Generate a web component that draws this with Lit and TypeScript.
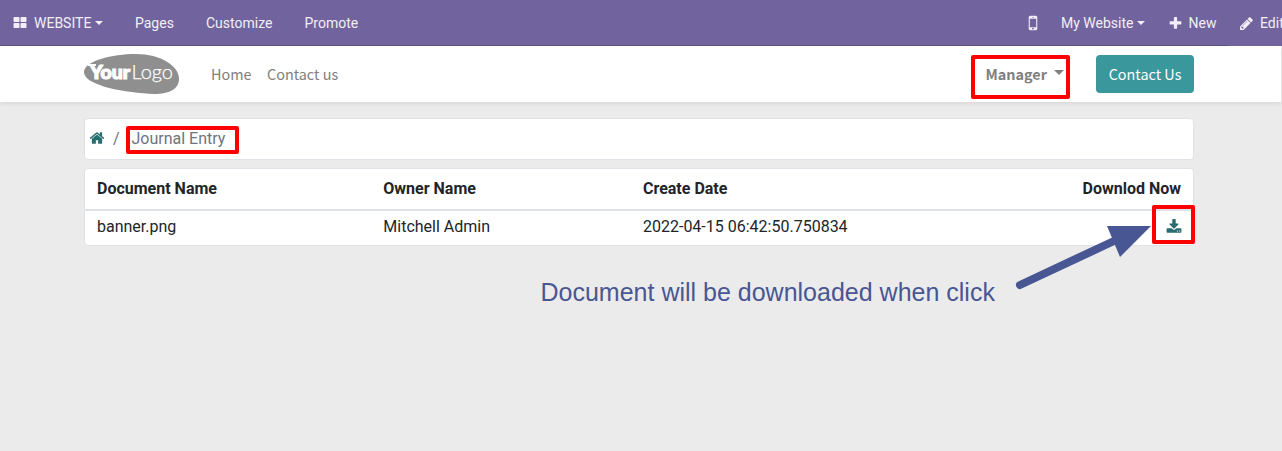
import { LitElement, html, css, svg } from "lit";
import { customElement, property } from "lit/decorators.js";

const ICONS: Record<string, string> = {
  grid: "M832 1024v384q0 52-38 90t-90 38h-512q-52 0-90-38t-38-90v-384q0-52 38-90t90-38h512q52 0 90 38t38 90zm0-768v384q0 52-38 90t-90 38h-512q-52 0-90-38t-38-90v-384q0-52 38-90t90-38h512q52 0 90 38t38 90zm896 768v384q0 52-38 90t-90 38h-512q-52 0-90-38t-38-90v-384q0-52 38-90t90-38h512q52 0 90 38t38 90zm0-768v384q0 52-38 90t-90 38h-512q-52 0-90-38t-38-90v-384q0-52 38-90t90-38h512q52 0 90 38t38 90z",
  mobile: "M976 1408q0-33-23.500-56.500t-56.500-23.500-56.500 23.500-23.500 56.500 23.500 56.500 56.500 23.500 56.500-23.500 23.500-56.500zm208-160v-704q0-13-9.500-22.500t-22.500-9.500h-512q-13 0-22.500 9.500t-9.500 22.500v704q0 13 9.500 22.500t22.500 9.500h512q13 0 22.500-9.500t9.500-22.500zm-192-848q0-16-16-16h-160q-16 0-16 16t16 16h160q16 0 16-16zm288-16v1024q0 52-38 90t-90 38h-512q-52 0-90-38t-38-90v-1024q0-52 38-90t90-38h512q52 0 90 38t38 90z",
  plus: "M1600 736v192q0 40-28 68t-68 28h-416v416q0 40-28 68t-68 28h-192q-40 0-68-28t-28-68v-416h-416q-40 0-68-28t-28-68v-192q0-40 28-68t68-28h416v-416q0-40 28-68t68-28h192q40 0 68 28t28 68v416h416q40 0 68 28t28 68z",
  pencil: "M491 1536l91-91-235-235-91 91v107h128v128h107zm523-928q0-22-22-22-10 0-17 7l-542 542q-7 7-7 17 0 22 22 22 10 0 17-7l542-542q7-7 7-17zm-54-192l416 416-832 832h-416v-416zm683 96q0 53-37 90l-166 166-416-416 166-165q36-38 90-38 53 0 91 38l235 234q37 39 37 91z",
  home: "M1472 992v480q0 26-19 45t-45 19h-384v-384h-256v384h-384q-26 0-45-19t-19-45v-480q0-1 .5-3t.5-3l575-474 575 474q1 2 1 6zm223-69l-62 74q-8 9-21 11h-3q-13 0-21-7l-692-577-692 577q-12 8-24 7-13-2-21-11l-62-74q-8-10-7-23.500t11-21.500l719-599q32-26 76-26t76 26l244 204v-195q0-14 9-23t23-9h192q14 0 23 9t9 23v408l219 182q10 8 11 21.500t-7 23.500z",
  download: "M1344 1344q0-26-19-45t-45-19-45 19-19 45 19 45 45 19 45-19 19-45zm256 0q0-26-19-45t-45-19-45 19-19 45 19 45 45 19 45-19 19-45zm128-224v320q0 40-28 68t-68 28h-1472q-40 0-68-28t-28-68v-320q0-40 28-68t68-28h465l135 136q58 56 136 56t136-56l136-136h464q40 0 68 28t28 68zm-325-569q17 41-14 70l-448 448q-18 19-45 19t-45-19l-448-448q-31-29-14-70 17-39 59-39h256v-448q0-26 19-45t45-19h256q26 0 45 19t19 45v448h256q42 0 59 39z",
};

@customElement("fa-icon")
export class FaIcon extends LitElement {
  @property() name = "home";
  static styles = css`
    :host { display: block; width: 15px; height: 15px; flex: none; }
    svg { display: block; width: 100%; height: 100%; fill: currentColor; overflow: visible; }
  `;
  render() {
    return html`<svg viewBox="0 0 1792 1792">${svg`<path d=${ICONS[this.name]} />`}</svg>`;
  }
}

@customElement("app-root")
export class AppRoot extends LitElement {
  static styles = css`
    :host {
      display: block; position: relative; height: 451px; overflow: hidden;
      background: #ebebeb; color: #212529; font: 16px/24px Roboto, sans-serif;
    }
    * { box-sizing: border-box; }
    .topbar {
      display: flex; align-items: center; height: 46px; width: 1282px; overflow: hidden;
      background: linear-gradient(#5d4f80, #5d4f80) 0 45px / 1228px 1px no-repeat #71639e;
      color: #f1eff5; font-size: 14px; line-height: 21px; white-space: nowrap;
    }
    .topbar > * { flex: none; }
    .grid-icon { width: 14px; height: 14px; margin-left: 12.500px; }
    .brand { margin-left: 7.500px; width: 62px; }
    .caret { border: 4px solid transparent; border-top-color: currentColor; border-bottom: 0; }
    .brand + .caret { margin-left: -1px; }
    .pages { margin-left: 32px; width: 39px; }
    .customize { margin-left: 32px; width: 66px; }
    .promote { margin-left: 32.500px; }
    .right { display: flex; align-items: center; margin-left: auto; width: 259px; }
    .right > * { flex: none; }
    .mobile { width: 20px; height: 20px; }
    .site { margin-left: 18px; width: 73px; }
    .site + .caret { margin-left: 3px; }
    .plus { margin-left: 22.500px; }
    .new { margin-left: 6px; width: 29px; }
    .pencil { margin-left: 21px; }
    .edit { margin-left: 6.500px; }
    .nav {
      display: flex; align-items: center; height: 56px; width: 1281px; padding-left: 84px;
      background: #fff; box-shadow: 0 2px 4px rgba(0,0,0,.08);
      font-family: "Source Sans Pro", "Noto Sans CJK SC", sans-serif; font-size: 14.400px;
      color: #808080; white-space: nowrap;
    }
    .logo { width: 96px; height: 42px; display: block; }
    .home { margin-left: 31px; width: 40px; }
    .contact { margin-left: 16px; }
    .user { margin-left: auto; font-weight: 700; width: 61.500px; }
    .user + .caret { margin: -3px 0 0 7px; border-width: 5px; border-bottom: 0; }
    .cta {
      margin: 0 87px 0 32px; width: 98px; height: 38px; border-radius: 4px; line-height: 38px;
      background: #3a979b; color: #fff; text-align: center;
    }
    .page { width: 1110px; margin: 16px 0 0 84px; }
    .crumbs {
      display: flex; height: 42px; padding: 8px 5px; border: 1px solid #dee2e6;
      border-radius: 4px; background: #fff; color: #6c757d;
    }
    .crumbs fa-icon { width: 16px; height: 16px; margin: 3px 0 0 -1px; color: #286d70; }
    .slash { margin-left: 8px; width: 6px; }
    .current { margin-left: 12.500px; }
    .table {
      margin-top: 8px; height: 78px; border: 1px solid #dee2e6; border-radius: 4px;
      background: #fff; overflow: hidden;
    }
    .row { display: grid; grid-template-columns: 286.300px 259.700px 1fr auto; padding: 0 12px; }
    .head { height: 42px; padding-top: 8px; font-weight: 700; border-bottom: 2px solid #dee2e6; }
    .data { padding-top: 4px; }
    .data fa-icon { justify-self: end; width: 16px; height: 16px; margin: 4px -1px 0 0; color: #286d70; }
    .mark { position: absolute; border: 4px solid #f00; border-radius: 2px; }
    .mark-user { left: 971px; top: 55px; width: 99px; height: 44px; }
    .mark-crumb { left: 126px; top: 126px; width: 113px; height: 28px; }
    .mark-load { left: 1152px; top: 205px; width: 43px; height: 39px; }
    .note {
      position: absolute; left: 540.500px; top: 277px; color: #485693; white-space: nowrap;
      font: 25px/30px "Liberation Sans", Arial, sans-serif;
    }
    .arrow { position: absolute; left: 1010px; top: 220px; width: 150px; height: 75px; }
  `;

  render() {
    return html`
      <header class="topbar">
        <fa-icon class="grid-icon" name="grid"></fa-icon>
        <span class="brand">WEBSITE</span><i class="caret"></i>
        <span class="pages">Pages</span><span class="customize">Customize</span><span class="promote">Promote</span>
        <div class="right">
          <fa-icon class="mobile" name="mobile"></fa-icon>
          <span class="site">My Website</span><i class="caret"></i>
          <fa-icon class="plus" name="plus"></fa-icon><span class="new">New</span>
          <fa-icon class="pencil" name="pencil"></fa-icon><span class="edit">Edit</span>
        </div>
      </header>
      <nav class="nav">
        <svg class="logo" viewBox="0 0 96 42">
          <path fill="#8f8f8f" d="M0 19C0 8 28 1 52 1C77 1 95 13 95 26C95 36 85 41 70 41C43 40 0 33 0 19Z" />
          <path fill="#fff" d="M4 11h8v2H4z" />
          <text x="6" y="26" fill="#fff" stroke="#fff" stroke-width="1.200" font-family="Lato" font-weight="900" font-size="19" textLength="40" lengthAdjust="spacingAndGlyphs">Your</text>
          <text x="47.500" y="26" fill="#fff" stroke="#fff" stroke-width=".25" font-family="Lato" font-weight="300" font-size="20" textLength="41.500" lengthAdjust="spacingAndGlyphs">Logo</text>
        </svg>
        <span class="home">Home</span><span class="contact">Contact us</span>
        <span class="user">Manager</span><i class="caret"></i>
        <span class="cta">Contact Us</span>
      </nav>
      <main class="page">
        <div class="crumbs">
          <fa-icon name="home"></fa-icon><span class="slash">/</span><span class="current">Journal Entry</span>
        </div>
        <section class="table">
          <div class="row head"><span>Document Name</span><span>Owner Name</span><span>Create Date</span><span>Downlod Now</span></div>
          <div class="row data"><span>banner.png</span><span>Mitchell Admin</span><span>2022-04-15 06:42:50.750834</span><fa-icon name="download"></fa-icon></div>
        </section>
      </main>
      <div class="mark mark-user"></div>
      <div class="mark mark-crumb"></div>
      <div class="mark mark-load"></div>
      <div class="note">Document will be downloaded when click</div>
      <svg class="arrow" viewBox="0 0 150 75">
        <path d="M10 65L105 20.500" stroke="#485693" stroke-width="8" stroke-linecap="round" />
        <path d="M97 6H141L110 37Z" fill="#485693" />
      </svg>
    `;
  }
}
